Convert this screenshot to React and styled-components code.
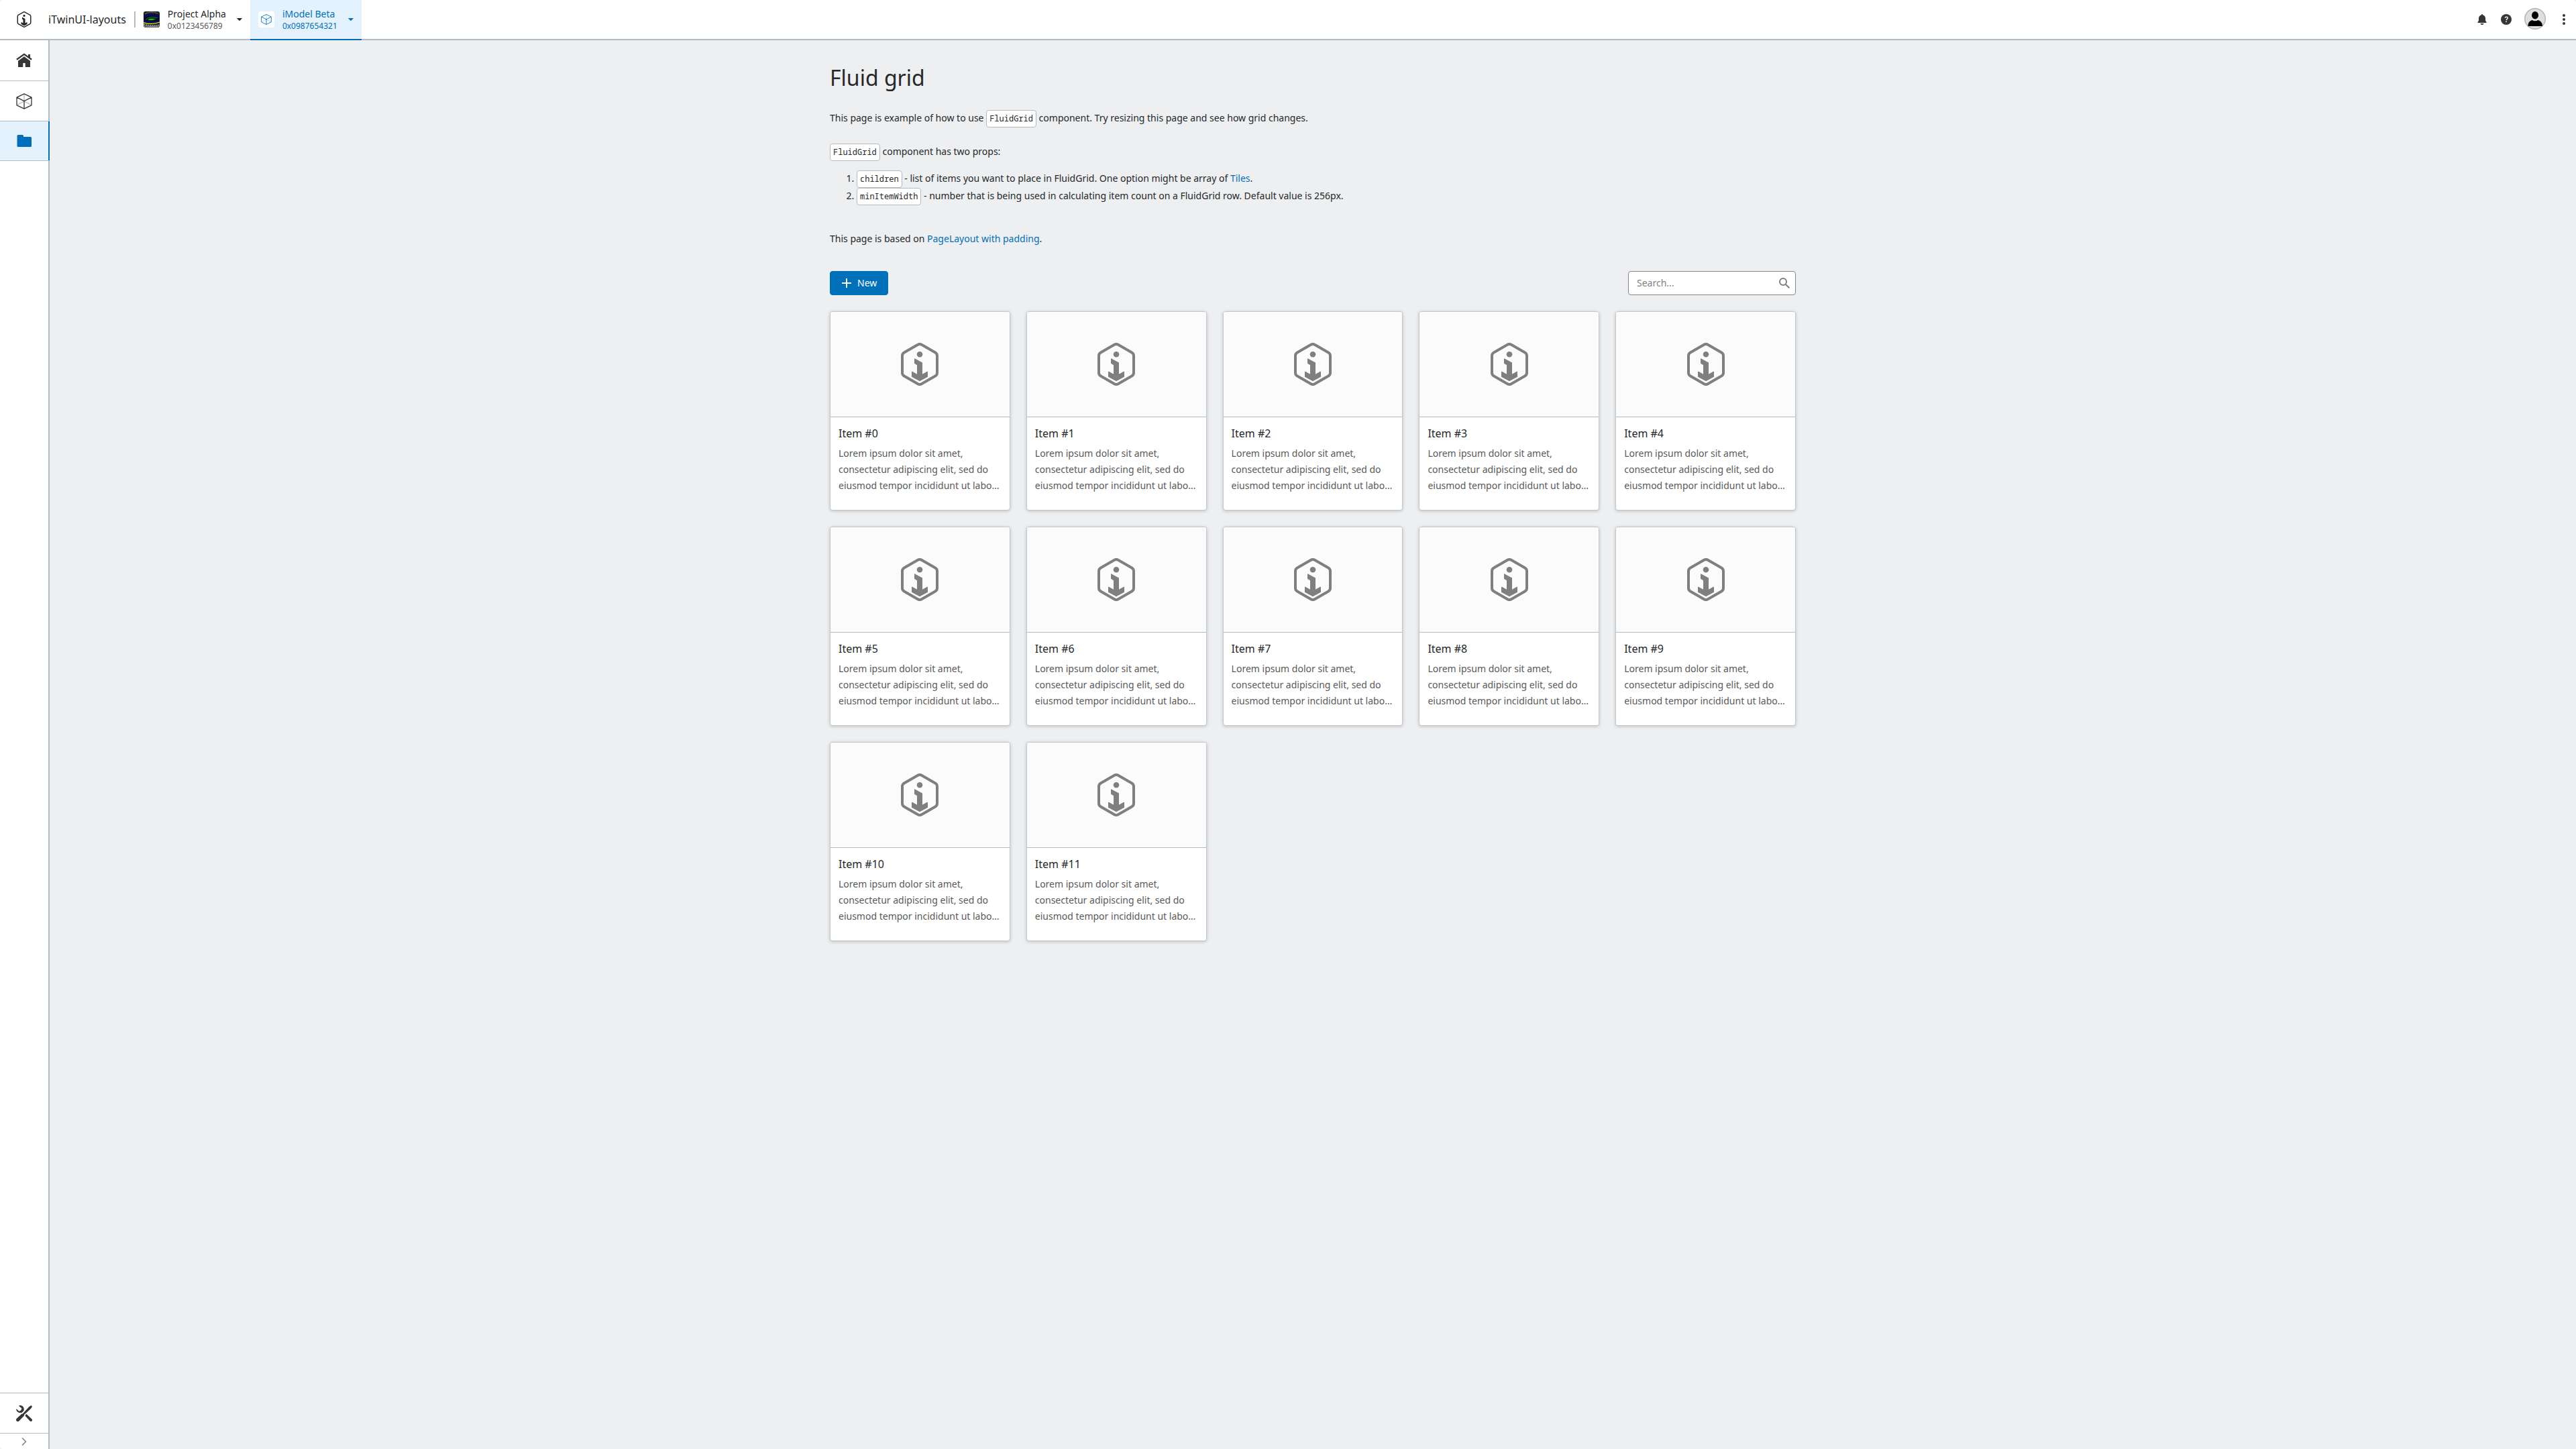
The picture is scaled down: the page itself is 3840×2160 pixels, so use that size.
import React from 'react';
import styled, { createGlobalStyle, css } from 'styled-components';

const color = {
  text: '#262829',
  muted: '#595959',
  icon: '#363636',
  faint: '#7f7f7f',
  primary: '#0070ba',
  selected: '#e3f2fc',
  border: '#b1bbc1',
  page: '#edeff1',
};

const GlobalStyle = createGlobalStyle`
  *, *::before, *::after { box-sizing: border-box; }
  html { background: ${color.page}; }
  body {
    margin: 0;
    color: ${color.text};
    font-family: 'Noto Sans', 'Open Sans', sans-serif;
    font-size: 14px;
    line-height: 22px;
  }
  button, input { font: inherit; color: inherit; }
  svg { display: block; flex: none; }
`;

const Shell = styled.div`
  display: flex;
  flex-direction: column;
  min-height: 100vh;
  border-radius: 4px;
  overflow: hidden;
`;

const Header = styled.header`
  display: flex;
  justify-content: space-between;
  height: 60px;
  background: #fff;
  box-shadow: inset 0 -2px ${color.border};
`;

const HeaderGroup = styled.div`
  display: flex;
  align-items: center;
  height: 60px;
`;

const Brand = styled.a`
  display: flex;
  align-items: center;
  gap: 24px;
  height: 58px;
  margin-bottom: 2px;
  padding: 0 12px 0 24px;
  color: inherit;
  font-size: 16px;
  text-decoration: none;
`;

const Divider = styled.span`
  width: 2px;
  height: 24px;
  margin-bottom: 2px;
  background: ${color.border};
`;

const Crumb = styled.button`
  display: flex;
  align-items: center;
  gap: 12px;
  height: 60px;
  padding: 0 8px 2px 12px;
  border: 0;
  background: transparent;
  text-align: left;
  cursor: pointer;
  ${(p) =>
    p.$active &&
    css`
      color: ${color.primary};
      background: ${color.selected};
      box-shadow: inset 0 -2px ${color.primary};
    `}
`;

const CrumbIcon = styled.span`
  display: grid;
  place-items: center;
  width: 24px;
  height: 24px;
  border-radius: 3px;
  overflow: hidden;
  background: #fff;
`;

const CrumbText = styled.span`
  display: flex;
  flex-direction: column;
  line-height: 20px;
`;

const CrumbId = styled.span`
  font-size: 12px;
  line-height: 16px;
  color: ${(p) => (p.$active ? 'inherit' : color.muted)};
`;

const IconButton = styled.button`
  display: grid;
  place-items: center;
  width: 36px;
  height: 36px;
  margin-bottom: 2px;
  padding: 0;
  border: 0;
  background: transparent;
  color: ${color.icon};
  cursor: pointer;
`;

const AvatarButton = styled(IconButton)`
  width: 50px;
  margin-bottom: 4px;
`;

const Body = styled.div`
  display: flex;
  flex: 1;
`;

const Sidebar = styled.nav`
  display: flex;
  flex-direction: column;
  justify-content: space-between;
  width: 74px;
  background: #fff;
  box-shadow: inset -2px 0 ${color.border};
`;

const SideList = styled.div`
  display: flex;
  flex-direction: column;
`;

const SideItem = styled.button`
  display: grid;
  place-items: center;
  width: 100%;
  height: 60px;
  padding: 0 2px 0 0;
  border: 0;
  border-bottom: 1px solid ${color.border};
  background: transparent;
  color: ${color.icon};
  cursor: pointer;
  ${SideList} > &:first-child:not(:last-child) { height: 61px; }
  ${(p) =>
    p.$active &&
    css`
      height: 59px;
      color: ${color.primary};
      background: ${color.selected};
      box-shadow: inset -2px 0 ${color.primary};
    `}
`;

const SideFooter = styled.div`
  display: flex;
  flex-direction: column;
  border-top: 1px solid ${color.border};
`;

const ExpandButton = styled.button`
  display: grid;
  place-items: center;
  height: 23px;
  padding: 0 2px 0 0;
  border: 0;
  background: transparent;
  color: ${color.faint};
  cursor: pointer;
`;

const Main = styled.main`
  flex: 1;
  min-width: 0;
  padding: 32px 24px;
`;

const Content = styled.div`
  max-width: 1440px;
  margin: 0 auto;
`;

const Title = styled.h1`
  margin: 0 0 24px;
  font-size: 32px;
  font-weight: 400;
  line-height: 48px;
`;

const Paragraph = styled.p`
  margin: 0 0 ${(p) => (p.$tight ? 14 : 24)}px;
  line-height: 22px;
`;

const PropList = styled.ol`
  margin: 0 0 39px;
  padding-left: 40px;
`;

const Code = styled.code`
  display: inline-block;
  padding: 4px;
  border: 1px solid ${color.border};
  border-radius: 4px;
  background: #fff;
  font-family: 'Noto Sans Mono', 'DejaVu Sans Mono', monospace;
  font-size: 12px;
  line-height: 16px;
`;

const Link = styled.a`
  color: ${color.primary};
  text-decoration: none;
`;

const Toolbar = styled.div`
  display: flex;
  justify-content: space-between;
  margin: 37px 0 24px;
`;

const NewButton = styled.button`
  display: flex;
  align-items: center;
  gap: 8px;
  height: 36px;
  padding: 0 16px;
  border: 1px solid ${color.primary};
  border-radius: 4px;
  background: ${color.primary};
  color: #fff;
  cursor: pointer;
`;

const SearchBox = styled.label`
  display: flex;
  align-items: center;
  width: 250px;
  height: 36px;
  padding: 0 8px 0 12px;
  border: 1px solid #84888c;
  border-radius: 4px;
  background: #fff;
  color: ${color.faint};
`;

const SearchInput = styled.input`
  flex: 1;
  min-width: 0;
  padding: 0;
  border: 0;
  outline: 0;
  background: transparent;
  color: ${color.text};
  &::placeholder { color: ${color.faint}; opacity: 1; }
`;

const Grid = styled.div`
  display: grid;
  grid-template-columns: repeat(auto-fill, minmax(256px, 1fr));
  gap: 24px;
`;

const Tile = styled.article`
  border: 1px solid #c0c8cd;
  border-radius: 4px;
  overflow: hidden;
  background: #fff;
  box-shadow: 0 1px 5px rgba(0, 0, 0, 0.2);
`;

const Thumbnail = styled.div`
  display: grid;
  place-items: center;
  height: 157px;
  border-bottom: 1px solid ${color.border};
  background: #fbfbfb;
  color: ${color.faint};
`;

const TileBody = styled.div`
  padding: 12px 12px 24px;
`;

const TileName = styled.h2`
  margin: 0 0 6px;
  font-size: 16px;
  font-weight: 400;
  line-height: 24px;
`;

const TileText = styled.p`
  display: -webkit-box;
  -webkit-box-orient: vertical;
  -webkit-line-clamp: 3;
  margin: 0;
  overflow: hidden;
  color: ${color.muted};
  line-height: 24px;
`;

function TwinLogo({ size }) {
  return (
    <svg width={size} height={size} viewBox="0 0 16 16" fill="currentColor" aria-hidden="true">
      <path
        d="M7.3.7a1.4 1.4 0 0 1 1.4 0l5.1 2.9a1.4 1.4 0 0 1 .7 1.2v6.4a1.4 1.4 0 0 1-.7 1.2l-5.1 2.9a1.4 1.4 0 0 1-1.4 0l-5.1-2.9a1.4 1.4 0 0 1-.7-1.2V4.800a1.400 1.400 0 0 1 .7-1.200z"
        fill="none"
        stroke="currentColor"
      />
      <circle cx="8" cy="4.300" r="1.070" />
      <path d="M6.200 5.850 9 7.350v4.350l1.750-1q.25-.1.250.15v1.850L8 14.300l-3-1.600v-1.850q0-.25.250-.15l1.750 1V8.300L6 7.700V6q0-.2.200-.15z" />
    </svg>
  );
}

function CubeIcon({ size }) {
  return (
    <svg width={size} height={size} viewBox="0 0 24 24" fill="none" stroke="currentColor" strokeWidth="1.300" strokeLinejoin="round" aria-hidden="true">
      <path d="M12 1v11M1.200 17.500 12 12l10.800 5.500" opacity="0.350" />
      <path d="M12 .8 23 6.200v11.600l-11 5.400L1 17.800V6.200zM1 6.200l11 5.500 11-5.500M12 11.700v11.500" />
    </svg>
  );
}

function HomeIcon() {
  return (
    <svg width="24" height="24" viewBox="0 0 24 24" fill="currentColor" aria-hidden="true">
      <path d="M18 3h3v6.200l-3-2.300z" />
      <path d="M.9 10.800 12 2.800l11.100 8" fill="none" stroke="currentColor" strokeWidth="2.300" />
      <path d="M12 6.200 21 12.800V22h-7.300v-5.300a.6.6 0 0 0-.6-.6h-2.200a.6.6 0 0 0-.6.6V22H3v-9.200z" />
    </svg>
  );
}

function FolderIcon() {
  return (
    <svg width="24" height="24" viewBox="0 0 24 24" fill="currentColor" aria-hidden="true">
      <path d="M3 3h6.500a1.500 1.500 0 0 1 1.500 1.500V6h10.500A1.500 1.500 0 0 1 23 7.500v12a1.500 1.500 0 0 1-1.500 1.500H3a1.500 1.500 0 0 1-1.500-1.500v-15A1.500 1.500 0 0 1 3 3z" />
    </svg>
  );
}

function ToolsIcon() {
  return (
    <svg width="24" height="24" viewBox="0 0 24 24" fill="currentColor" aria-hidden="true">
      <path d="M23 .4c.8.500 1 1.200.6 2.200l-1.700 2.300-10 9.100.2 1.200-7.700 8.100c-1.200 1.100-2.800 1-3.700 0-1-1.100-.9-2.600.2-3.700l7.600-7.200 1.300.2L19.300 2.100 21.600.5c.5-.3 1-.3 1.400-.1z" />
      <path d="M15.300 12.700l8 7.600c1 1 1 2.200.2 3-.8.900-2.100.8-3-.1l-7.200-8z" />
      <path d="M4.300.2c2.400-.5 4.700 0 6.100 1.700 1.300 1.500 1.600 3.400 1.100 5.200l.4.500-3.500 3.300-.8-.1C4.500 11.700.9 9.700.100 6.200L.7 5.300l3.400 3.100c2.300.3 4.400-1.600 4.100-4.100L4.500 1.200z" />
    </svg>
  );
}

function ChevronRight() {
  return (
    <svg width="12" height="12" viewBox="0 0 12 12" fill="none" stroke="currentColor" strokeWidth="1.500" aria-hidden="true">
      <path d="M3 .5 8.500 6 3 11.500" />
    </svg>
  );
}

function CaretDown() {
  return (
    <svg width="16" height="16" viewBox="0 0 16 16" fill="currentColor" aria-hidden="true">
      <path d="M4.800 6h6.400q1 0 .4.700L8.400 9.800q-.4.300-.8 0L4.400 6.700Q3.800 6 4.800 6z" />
    </svg>
  );
}

function ProjectThumb() {
  return (
    <svg width="24" height="24" viewBox="0 0 24 24" aria-hidden="true">
      <rect width="24" height="24" fill="#161616" />
      <path d="M2 3.500Q11-.5 22 3" fill="none" stroke="#8b8b8b" strokeWidth="2" strokeDasharray="1 1.200" />
      <path d="M0 19.500q12 3.500 24 1M1 23h23" fill="none" stroke="#8d8d8d" strokeWidth="3" strokeDasharray="2 1" />
      <path d="M0 6Q12 1 24 6v10q-12 5-24 0z" fill="#0a0a64" />
      <path d="M0 16.500q12 4 24-.5" fill="none" stroke="#e6de12" strokeWidth="1.300" />
      <ellipse cx="12" cy="11" rx="11" ry="4.500" fill="#020c14" />
      <path d="M3 12.500Q8 7 21 9.500" fill="none" stroke="#0b7d4a" />
      <path d="M6 12.500q5-4 12-1-5 3-12 1z" fill="#08c916" />
      <path d="M8 11q4-1.500 8 0" fill="none" stroke="#02200a" strokeWidth=".8" />
    </svg>
  );
}

function BellIcon() {
  return (
    <svg width="16" height="16" viewBox="0 0 16 16" fill="currentColor" aria-hidden="true">
      <path d="M8 0a1 1 0 0 1 1 1v.3c2.400.5 4 2.500 4 5V9.500L14.500 12v1h-13v-1L3 9.500V6.300c0-2.500 1.600-4.500 4-5V1a1 1 0 0 1 1-1zM5.500 14h5a2.500 2 0 0 1-5 0z" />
    </svg>
  );
}

function HelpIcon() {
  return (
    <svg width="16" height="16" viewBox="0 0 16 16" aria-hidden="true">
      <circle cx="8" cy="8" r="8" fill="currentColor" />
      <path d="M6.200 5.800c.1-1.100.9-1.700 2-1.700 1.200 0 1.900.7 1.900 1.600 0 1.500-1.900 1.600-1.900 3.500" fill="none" stroke="#fff" strokeWidth="1.400" />
      <circle cx="8" cy="11.300" r=".9" fill="#fff" />
    </svg>
  );
}

function UserAvatar() {
  return (
    <svg width="32" height="32" viewBox="0 0 32 32" aria-hidden="true">
      <circle cx="16" cy="16" r="15.300" fill="#dedede" stroke="#b2b2b2" strokeWidth="1.400" />
      <ellipse cx="16" cy="10.700" rx="5" ry="5.700" />
      <path d="M5.500 27c0-5 1.600-7.500 6.200-9 2.600 1.700 6 1.700 8.600 0 4.600 1.500 6.700 4 6.700 9z" />
    </svg>
  );
}

function MoreIcon() {
  return (
    <svg width="16" height="16" viewBox="0 0 16 16" fill="currentColor" aria-hidden="true">
      <circle cx="8" cy="2" r="2" />
      <circle cx="8" cy="8" r="2" />
      <circle cx="8" cy="14" r="2" />
    </svg>
  );
}

function PlusIcon() {
  return (
    <svg width="16" height="16" viewBox="0 0 16 16" fill="currentColor" aria-hidden="true">
      <path d="M7 1h2v6h6v2H9v6H7V9H1V7h6z" />
    </svg>
  );
}

function SearchIcon() {
  return (
    <svg width="16" height="16" viewBox="0 0 16 16" fill="none" stroke="currentColor" strokeWidth="2" aria-hidden="true">
      <circle cx="6" cy="6" r="5" />
      <path d="m9.700 9.700 5.600 5.600" />
    </svg>
  );
}

const items = Array.from({ length: 12 }, (_, i) => `Item #${i}`);

export default function App() {
  return (
    <>
      <GlobalStyle />
      <Shell>
        <Header>
          <HeaderGroup>
            <Brand href="#">
              <TwinLogo size={24} />
              iTwinUI-layouts
            </Brand>
            <Divider />
            <Crumb type="button">
              <CrumbIcon>
                <ProjectThumb />
              </CrumbIcon>
              <CrumbText>
                Project Alpha
                <CrumbId>0x0123456789</CrumbId>
              </CrumbText>
              <CaretDown />
            </Crumb>
            <Crumb type="button" $active>
              <CrumbIcon>
                <CubeIcon size={16} />
              </CrumbIcon>
              <CrumbText>
                iModel Beta
                <CrumbId $active>0x0987654321</CrumbId>
              </CrumbText>
              <CaretDown />
            </Crumb>
          </HeaderGroup>
          <HeaderGroup>
            <IconButton type="button" aria-label="Notifications"><BellIcon /></IconButton>
            <IconButton type="button" aria-label="Help"><HelpIcon /></IconButton>
            <AvatarButton type="button" aria-label="Account"><UserAvatar /></AvatarButton>
            <IconButton type="button" aria-label="More options"><MoreIcon /></IconButton>
          </HeaderGroup>
        </Header>
        <Body>
          <Sidebar aria-label="Main">
            <SideList>
              <SideItem type="button" aria-label="Home"><HomeIcon /></SideItem>
              <SideItem type="button" aria-label="iModels"><CubeIcon size={24} /></SideItem>
              <SideItem type="button" aria-label="Files" $active><FolderIcon /></SideItem>
            </SideList>
            <SideFooter>
              <SideItem type="button" aria-label="Settings"><ToolsIcon /></SideItem>
              <ExpandButton type="button" aria-label="Expand sidebar"><ChevronRight /></ExpandButton>
            </SideFooter>
          </Sidebar>
          <Main>
            <Content>
              <Title>Fluid grid</Title>
              <Paragraph>
                This page is example of how to use <Code>FluidGrid</Code> component. Try resizing this page and see how
                grid changes.
              </Paragraph>
              <Paragraph $tight>
                <Code>FluidGrid</Code> component has two props:
              </Paragraph>
              <PropList>
                <li>
                  <Code>children</Code> - list of items you want to place in FluidGrid. One option might be array of{' '}
                  <Link href="#tiles">Tiles</Link>.
                </li>
                <li>
                  <Code>minItemWidth</Code> - number that is being used in calculating item count on a FluidGrid row.
                  Default value is 256px.
                </li>
              </PropList>
              <Paragraph>
                This page is based on <Link href="#page-layout">PageLayout with padding</Link>.
              </Paragraph>
              <Toolbar>
                <NewButton type="button">
                  <PlusIcon />
                  New
                </NewButton>
                <SearchBox>
                  <SearchInput type="text" aria-label="Search" placeholder="Search..." />
                  <SearchIcon />
                </SearchBox>
              </Toolbar>
              <Grid>
                {items.map((name) => (
                  <Tile key={name}>
                    <Thumbnail>
                      <TwinLogo size={64} />
                    </Thumbnail>
                    <TileBody>
                      <TileName>{name}</TileName>
                      <TileText>
                        Lorem ipsum dolor sit amet, consectetur adipiscing elit, sed do eiusmod tempor incididunt ut
                        labore et dolore magna aliqua.
                      </TileText>
                    </TileBody>
                  </Tile>
                ))}
              </Grid>
            </Content>
          </Main>
        </Body>
      </Shell>
    </>
  );
}
